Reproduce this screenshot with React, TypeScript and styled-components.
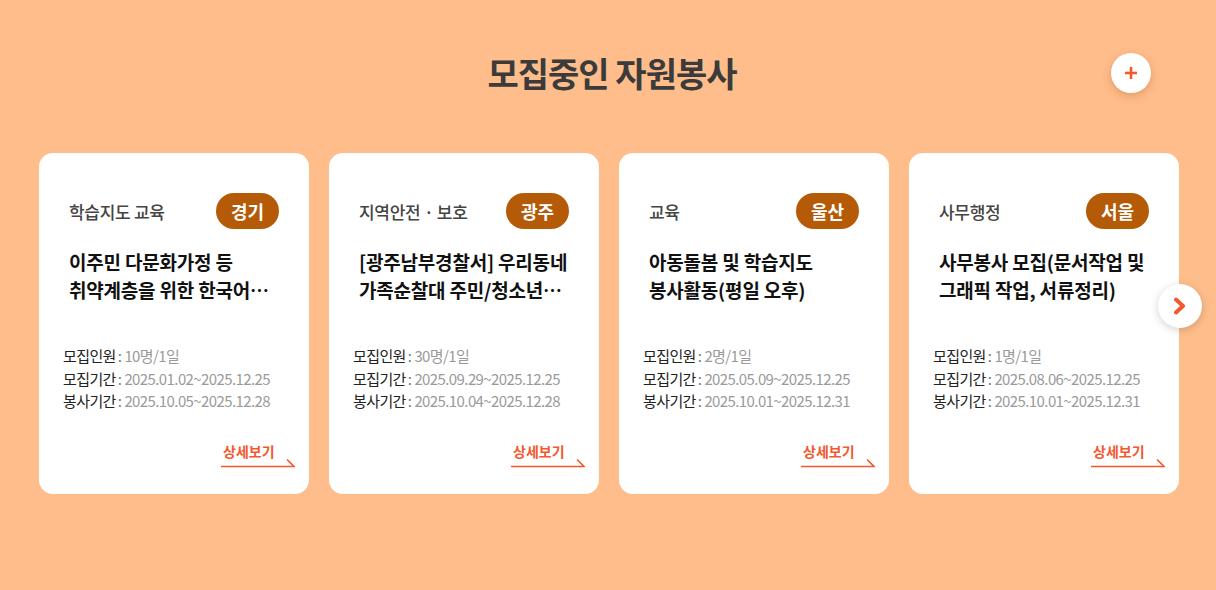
import React from "react";
import styled, { createGlobalStyle } from "styled-components";

const Global = createGlobalStyle`
  html, body { margin: 0; padding: 0; }
  body {
    background: #ffbd8b;
    font-family: "Noto Sans CJK KR", "Noto Sans", sans-serif;
  }
`;

const Section = styled.section`
  width: 1216px;
  height: 590px;
  background: #ffbd8b;
  padding-top: 53px;
  box-sizing: border-box;
`;

const Header = styled.div`
  position: relative;
  width: 1140px;
  margin-left: 39px;
  height: 40px;
  display: flex;
  align-items: center;
  justify-content: center;
`;

const Title = styled.h2`
  margin: 0 0 0 6px;
  font-size: 34px;
  font-weight: 700;
  color: #3b3b3b;
  letter-spacing: -1px;
  line-height: 40px;
`;

const PlusButton = styled.button`
  position: absolute;
  right: 28px;
  top: 0;
  width: 40px;
  height: 40px;
  border-radius: 50%;
  border: none;
  background: #fff;
  box-shadow: 0 3px 8px rgba(160, 80, 20, 0.3);
  display: flex;
  align-items: center;
  justify-content: center;
  padding: 0;
`;

const Carousel = styled.div`
  position: relative;
  width: 1140px;
  margin: 60px 0 0 39px;
  display: grid;
  grid-template-columns: repeat(4, 270px);
  gap: 20px;
`;

const Card = styled.div`
  background: #fff;
  border-radius: 14px;
  height: 341px;
  box-sizing: border-box;
  padding: 40px 30px 0 30px;
  display: flex;
  flex-direction: column;
`;

const TopRow = styled.div`
  display: flex;
  align-items: center;
  justify-content: space-between;
  height: 36px;
`;

const Category = styled.span`
  font-size: 17px;
  color: #444;
  font-weight: 500;
  letter-spacing: -0.3px;
`;

const Badge = styled.span`
  height: 36px;
  padding: 0 15px;
  border-radius: 18px;
  background: #b55a06;
  color: #fff;
  font-size: 18px;
  font-weight: 700;
  display: flex;
  align-items: center;
`;

const CardTitle = styled.h3`
  margin: 19px -6px 0 0;
  font-size: 19px;
  font-weight: 700;
  color: #111;
  line-height: 28px;
  height: 56px;
  letter-spacing: -0.2px;
  word-break: keep-all;
  display: -webkit-box;
  -webkit-line-clamp: 2;
  -webkit-box-orient: vertical;
  overflow: hidden;
`;

const Info = styled.dl`
  margin: 41px 0 0 -6px;
  font-size: 15px;
  line-height: 22.5px;
  letter-spacing: -0.6px;
`;

const InfoRow = styled.div`
  display: flex;
  white-space: nowrap;
`;

const Label = styled.dt`
  color: #222;
`;

const Value = styled.dd`
  margin: 0;
  color: #9a9a9a;
  &::before {
    content: ":";
    color: #777;
    margin: 0 3px 0 2px;
  }
`;

const More = styled.a`
  margin-top: auto;
  margin-bottom: 26px;
  align-self: flex-end;
  margin-right: -16px;
  position: relative;
  width: 74px;
  height: 24px;
  color: #f4582e;
  font-size: 14px;
  font-weight: 700;
  text-decoration: none;
  box-sizing: border-box;
  padding-left: 2px;
  line-height: 14px;
`;

const MoreLine = styled.svg`
  position: absolute;
  left: 0;
  bottom: 0;
`;

const NextButton = styled.button`
  position: absolute;
  right: -23px;
  top: 131px;
  width: 44px;
  height: 44px;
  border-radius: 50%;
  border: none;
  background: #fff;
  box-shadow: 0 2px 8px rgba(0, 0, 0, 0.18);
  display: flex;
  align-items: center;
  justify-content: center;
  padding: 0;
`;

type Item = {
  cat: string;
  region: string;
  title: string;
  people: string;
  recruit: string;
  serve: string;
};

const items: Item[] = [
  {
    cat: "학습지도 교육",
    region: "경기",
    title: "이주민 다문화가정 등 취약계층을 위한 한국어 교육 봉사",
    people: "10명/1일",
    recruit: "2025.01.02~2025.12.25",
    serve: "2025.10.05~2025.12.28",
  },
  {
    cat: "지역안전 · 보호",
    region: "광주",
    title: "[광주남부경찰서] 우리동네 가족순찰대 주민/청소년 자율방범",
    people: "30명/1일",
    recruit: "2025.09.29~2025.12.25",
    serve: "2025.10.04~2025.12.28",
  },
  {
    cat: "교육",
    region: "울산",
    title: "아동돌봄 및 학습지도 봉사활동(평일 오후)",
    people: "2명/1일",
    recruit: "2025.05.09~2025.12.25",
    serve: "2025.10.01~2025.12.31",
  },
  {
    cat: "사무행정",
    region: "서울",
    title: "사무봉사 모집(문서작업 및 그래픽 작업, 서류정리)",
    people: "1명/1일",
    recruit: "2025.08.06~2025.12.25",
    serve: "2025.10.01~2025.12.31",
  },
];

export default function App() {
  return (
    <>
      <Global />
      <Section>
        <Header>
          <Title>모집중인 자원봉사</Title>
          <PlusButton aria-label="더보기">
            <svg width="14" height="14" viewBox="0 0 14 14">
              <path d="M7 1v12M1 7h12" stroke="#f4582e" strokeWidth="2.6" />
            </svg>
          </PlusButton>
        </Header>
        <Carousel>
          {items.map((it) => (
            <Card key={it.region}>
              <TopRow>
                <Category>{it.cat}</Category>
                <Badge>{it.region}</Badge>
              </TopRow>
              <CardTitle>{it.title}</CardTitle>
              <Info>
                <InfoRow>
                  <Label>모집인원</Label>
                  <Value>{it.people}</Value>
                </InfoRow>
                <InfoRow>
                  <Label>모집기간</Label>
                  <Value>{it.recruit}</Value>
                </InfoRow>
                <InfoRow>
                  <Label>봉사기간</Label>
                  <Value>{it.serve}</Value>
                </InfoRow>
              </Info>
              <More href="#">
                상세보기
                <MoreLine width="74" height="10" viewBox="0 0 74 10">
                  <path d="M0 8.5h73L66 1.5" fill="none" stroke="#f4582e" strokeWidth="1.6" />
                </MoreLine>
              </More>
            </Card>
          ))}
          <NextButton aria-label="다음">
            <svg width="16" height="18" viewBox="0 0 16 18">
              <path d="M4 2.5l7 6.5-7 6.5" fill="none" stroke="#f4582e" strokeWidth="4" strokeLinecap="round" strokeLinejoin="round" />
            </svg>
          </NextButton>
        </Carousel>
      </Section>
    </>
  );
}
